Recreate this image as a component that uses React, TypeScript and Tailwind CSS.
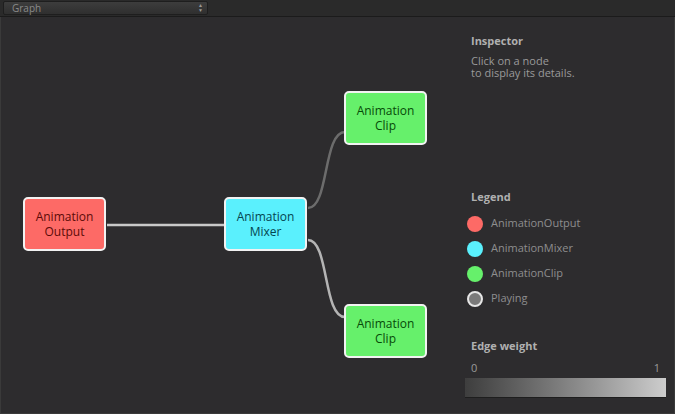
type NodeProps = {
  label: [string, string];
  left: string;
  top: string;
  color: string;
};

function GraphNode({ label, left, top, color }: NodeProps) {
  return (
    <div
      className={`absolute ${left} ${top} ${color} flex h-[54px] w-[83px] flex-col items-center justify-center rounded-[5px] border-2 border-[#f2f2f2] text-[12px] leading-[15px]`}
    >
      <span>{label[0]}</span>
      <span>{label[1]}</span>
    </div>
  );
}

function LegendItem({ dot, text }: { dot: string; text: string }) {
  return (
    <div className="flex h-[25px] items-center gap-[8px]">
      <span className={`h-[16px] w-[16px] rounded-full ${dot}`}></span>
      <span>{text}</span>
    </div>
  );
}

export default function App() {
  return (
    <div
      className="flex h-[414px] w-[675px] flex-col overflow-hidden bg-[#2d2c2e] text-[11px]"
      style={{ fontFamily: '"Open Sans", "Noto Sans", sans-serif' }}
    >
      {/* toolbar */}
      <div className="flex h-[17px] shrink-0 items-center border-b border-[#1b1b1b] bg-[#2a2a2a] px-[3px]">
        <div className="flex h-[14px] w-[205px] items-center justify-between rounded-[2px] border border-[#1e1e1e] bg-gradient-to-b from-[#3d3d3d] to-[#2f2f2f] pl-[8px] pr-[4px] text-[10px] leading-none text-[#8a8a8a]">
          <span>Graph</span>
          <span className="flex flex-col text-[5px] leading-[5px] text-[#9a9a9a]">
            <span>▲</span>
            <span>▼</span>
          </span>
        </div>
      </div>

      <div className="flex flex-1 border-l border-b border-r border-[#3a3a3a]">
        {/* graph canvas */}
        <div className="relative flex-1">
          <svg className="absolute inset-0 h-full w-full" fill="none">
            <path d="M106 208 L224 208" stroke="#c9c9c9" strokeWidth="2.5" />
            <path d="M307 191 C328 191 322 115 344 115" stroke="#6c6c6c" strokeWidth="2.5" />
            <path d="M307 223 C328 223 322 300 344 300" stroke="#b4b4b4" strokeWidth="2.5" />
          </svg>
          <GraphNode label={["Animation", "Output"]} left="left-[22px]" top="top-[180px]" color="bg-[#fd6a66] text-[#5c0a08]" />
          <GraphNode label={["Animation", "Mixer"]} left="left-[223px]" top="top-[180px]" color="bg-[#5af0fd] text-[#054550]" />
          <GraphNode label={["Animation", "Clip"]} left="left-[343px]" top="top-[74px]" color="bg-[#66f06b] text-[#064a08]" />
          <GraphNode label={["Animation", "Clip"]} left="left-[343px]" top="top-[287px]" color="bg-[#66f06b] text-[#064a08]" />
        </div>

        {/* inspector */}
        <div className="flex w-[210px] flex-col text-[#8e8e8e]">
          <div className="mt-[16px] pl-[7px] font-bold text-[#b0b0b0]">Inspector</div>
          <div className="mt-[5px] pl-[7px] leading-[12px] text-[#9a9a9a]">
            Click on a node
            <br />
            to display its details.
          </div>

          <div className="mt-[110px] pl-[7px] font-bold text-[#b0b0b0]">Legend</div>
          <div className="mt-[6px] flex flex-col pl-[3px]">
            <LegendItem dot="bg-[#fd6a66]" text="AnimationOutput" />
            <LegendItem dot="bg-[#5af0fd]" text="AnimationMixer" />
            <LegendItem dot="bg-[#66f06b]" text="AnimationClip" />
            <LegendItem dot="bg-[#7a7a7a] border-2 border-[#e6e6e6]" text="Playing" />
          </div>

          <div className="mt-[27px] pl-[7px] font-bold text-[#b0b0b0]">Edge weight</div>
          <div className="mt-[5px] flex justify-between pl-[7px] pr-[14px] text-[#9a9a9a]">
            <span>0</span>
            <span>1</span>
          </div>
          <div className="mt-[2px] ml-[1px] h-[20px] w-[201px] border-b border-[#1e1e1e] bg-gradient-to-r from-[#3e3e3e] to-[#cdcdcd]"></div>
        </div>
      </div>
    </div>
  );
}
